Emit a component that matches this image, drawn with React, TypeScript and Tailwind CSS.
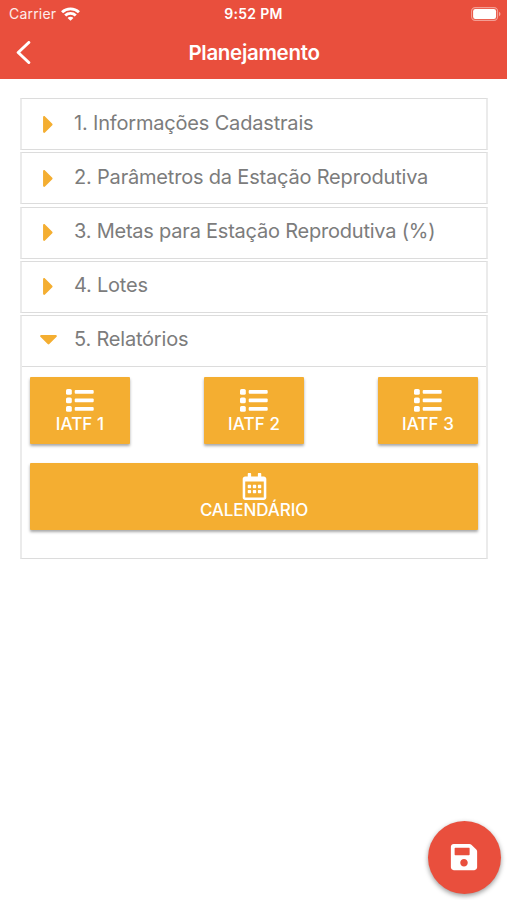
import React from "react";
import { FaCaretDown, FaCaretRight, FaRegCalendarAlt, FaSave } from "react-icons/fa";

const sections = [
  { title: "1. Informações Cadastrais", spacing: "tracking-[-0.18px]" },
  { title: "2. Parâmetros da Estação Reprodutiva", spacing: "tracking-[-0.19px]" },
  { title: "3. Metas para Estação Reprodutiva (%)", spacing: "tracking-[-0.22px]" },
  { title: "4. Lotes", spacing: "tracking-[-0.22px]" },
  { title: "5. Relatórios", spacing: "tracking-[-0.2px]", open: true },
];

function ListIcon() {
  return (
    <svg width="28" height="23" viewBox="0 0 28 23" fill="currentColor">
      {[0, 8.5, 17].map((y) => (
        <g key={y}>
          <rect x="0" y={y} width="5.8" height="5.8" rx="1.6" />
          <rect x="8.7" y={y + 1.1} width="19" height="3.7" rx="1" />
        </g>
      ))}
    </svg>
  );
}

function WifiIcon() {
  return (
    <svg width="19" height="14" viewBox="0 0 18 14" preserveAspectRatio="none" fill="none" stroke="currentColor" strokeWidth="2.7">
      <path d="M1 5.2a11.4 11.4 0 0 1 16 0" />
      <path d="M4 8.5a7.1 7.1 0 0 1 10 0" />
      <path d="M9 13.8 6.2 10.9a3.9 3.9 0 0 1 5.6 0Z" fill="currentColor" stroke="none" />
    </svg>
  );
}

function Battery() {
  return (
    <svg width="30" height="14" viewBox="0 0 30 14">
      <rect x="0.6" y="0.6" width="26" height="12.8" rx="3.6" fill="none" stroke="#fff" strokeOpacity=".45" strokeWidth="1.1" />
      <rect x="2.1" y="2.1" width="23" height="9.8" rx="2.2" fill="#fff" />
      <path d="M28 4.8c2 .8 2 3.6 0 4.4Z" fill="#fff" fillOpacity=".5" />
    </svg>
  );
}

export default function App() {
  return (
    <div className="flex h-[900px] w-[507px] flex-col bg-white font-['Inter','Liberation_Sans',sans-serif]">
      <header className="h-[79px] bg-[#e94f3d] text-white">
        <div className="grid h-[27px] grid-cols-3 items-center pr-[6px] pl-[9px]">
          <div className="flex items-center gap-[5px] text-[14px] text-white/90">
            <span className="tracking-[0.2px]">Carrier</span>
            <span className="text-white">
              <WifiIcon />
            </span>
          </div>
          <span className="pr-[3px] text-center text-[14px] font-semibold tracking-[0.3px] whitespace-nowrap">9:52 PM</span>
          <div className="flex justify-end">
            <Battery />
          </div>
        </div>
        <div className="grid h-[51px] grid-cols-[60px_1fr_60px] items-center">
          <button className="pl-[16px]" aria-label="Voltar">
            <svg width="15" height="24" viewBox="0 0 15 24" fill="none" stroke="currentColor" strokeWidth="3" strokeLinecap="round" strokeLinejoin="round">
              <path d="M12.8 1.5 2.2 11.5l10.6 10" />
            </svg>
          </button>
          <h1 className="pt-[2px] pl-[1px] text-center text-[20.5px] font-semibold tracking-[-0.3px]">Planejamento</h1>
        </div>
      </header>

      <main className="flex flex-1 flex-col gap-[2.2px] pt-[19.2px] pr-[19px] pl-[20px]">
        {sections.map((s) => (
          <section key={s.title} className="border-x-2 border-y border-x-[#ebebeb] border-y-[#dcdcdc]">
            <div className="flex h-[50px] items-center text-[#f4ae31]">
              <span className="flex w-[52px] justify-center pl-[1px]">
                {s.open ? <FaCaretDown size={29} className="-mt-[4px]" /> : <FaCaretRight size={29} />}
              </span>
              <h2 className={`pb-[3px] text-[20px] text-[#7c7c7c] ${s.spacing}`}>{s.title}</h2>
            </div>
            {s.open && (
              <div className="h-[192px] border-t border-[#dcdcdc] px-[8px] pt-[10px] text-white">
                <div className="flex justify-between">
                  {["IATF 1", "IATF 2", "IATF 3"].map((label) => (
                    <button
                      key={label}
                      className="flex h-[67px] w-[100px] flex-col items-center rounded-[1px] bg-[#f4ae31] pt-[12px] shadow-[0_2px_3px_rgba(0,0,0,0.35)]"
                    >
                      <ListIcon />
                      <span className="mt-[1px] text-[17px] leading-[22px] font-medium tracking-[0.1px]">{label}</span>
                    </button>
                  ))}
                </div>
                <button className="mt-[19px] flex h-[67px] w-full flex-col items-center rounded-[1px] bg-[#f4ae31] pt-[10px] shadow-[0_2px_3px_rgba(0,0,0,0.35)]">
                  <FaRegCalendarAlt size={27} />
                  <span className="text-[17px] leading-[21px] font-medium tracking-[-0.1px]">CALENDÁRIO</span>
                </button>
              </div>
            )}
          </section>
        ))}
      </main>

      <footer className="flex justify-end pr-[6px] pb-[6px]">
        <button
          aria-label="Salvar"
          className="flex h-[73px] w-[73px] items-center justify-center rounded-full bg-[#e94f3d] pr-[1px] pb-[1px] text-white shadow-[0_2px_5px_rgba(0,0,0,0.4)]"
        >
          <FaSave size={30} />
        </button>
      </footer>
    </div>
  );
}
